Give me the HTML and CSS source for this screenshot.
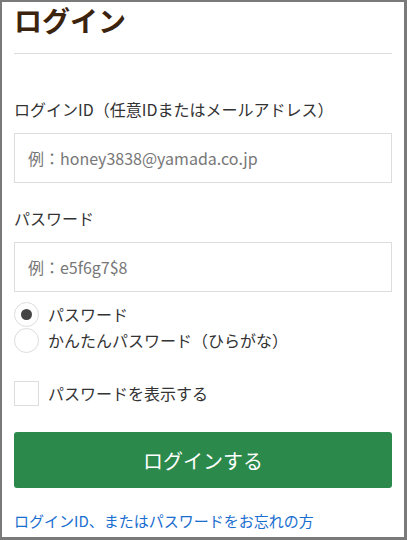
FILE: index.html
```html
<!DOCTYPE html>
<html lang="ja">
<head>
  <meta charset="UTF-8">
  <title>ログイン</title>
  <link rel="stylesheet" href="styles.css">
</head>
<body>
  <div class="frame">
    <h1 class="title">ログイン</h1>
    <hr class="rule">

    <form class="login-form">
      <label class="field-label" for="login-id">ログインID（任意IDまたはメールアドレス）</label>
      <input type="text" id="login-id" class="text-input" placeholder="例：honey3838@yamada.co.jp">

      <label class="field-label" for="password">パスワード</label>
      <input type="password" id="password" class="text-input" placeholder="例：e5f6g7$8">

      <div class="radio-group">
        <label class="choice">
          <span class="radio checked"></span>
          パスワード
        </label>
        <label class="choice">
          <span class="radio"></span>
          かんたんパスワード（ひらがな）
        </label>
      </div>

      <label class="choice show-pass">
        <span class="checkbox"></span>
        パスワードを表示する
      </label>

      <button type="submit" class="submit-btn">ログインする</button>
    </form>

    <a class="forgot" href="#">ログインID、またはパスワードをお忘れの方</a>
  </div>
</body>
</html>
```

FILE: styles.css
```css
/* Basic reset */
* {
  box-sizing: border-box;
}
body {
  margin: 0;
  font-family: "Noto Sans CJK JP", "Noto Sans", sans-serif;
  color: #333;
  background: #fff;
}
.frame {
  height: 540px;
  overflow: hidden;
  border-style: solid;
  border-color: #7a7a7a;
  border-width: 2px 3px 3px 2px;
  padding: 0 12px;
}
.title {
  margin: 0;
  font-size: 28px;
  line-height: 36px;
  font-weight: bold;
  color: #3b230e;
}
.rule {
  margin: 15px 0 0;
  border: none;
  border-top: 1px solid #ddd;
}
.login-form {
  display: flex;
  flex-direction: column;
}
.field-label {
  font-size: 16px;
  line-height: 24px;
  margin-top: 43px;
  color: #333;
}
.field-label + .text-input {
  margin-top: 12px;
}
.login-form .field-label:nth-of-type(2) {
  margin-top: 23px;
}
.text-input {
  height: 50px;
  width: 100%;
  border: 1px solid #ddd;
  padding: 0 13px;
  font-family: inherit;
  font-size: 16px;
  color: #333;
}
.text-input::placeholder {
  color: #777;
}
.radio-group {
  margin-top: 9px;
  display: flex;
  flex-direction: column;
}
.choice {
  display: flex;
  align-items: center;
  gap: 9px;
  font-size: 16px;
  line-height: 26px;
  color: #333;
}
.radio {
  width: 25px;
  height: 25px;
  border: 1px solid #ddd;
  border-radius: 50%;
  display: flex;
  align-items: center;
  justify-content: center;
}
.radio.checked::after {
  content: "";
  width: 11px;
  height: 11px;
  border-radius: 50%;
  background: #444;
}
.checkbox {
  width: 25px;
  height: 25px;
  border: 1px solid #ddd;
}
.show-pass {
  margin-top: 27px;
}
.submit-btn {
  margin-top: 26px;
  height: 56px;
  width: 100%;
  border: none;
  border-radius: 3px;
  background: #2b8a4b;
  color: #fff;
  font-family: inherit;
  font-size: 20px;
  cursor: pointer;
}
.forgot {
  display: block;
  margin-top: 22px;
  font-size: 15px;
  line-height: 22px;
  color: #1a6ecf;
  text-decoration: none;
}
```
